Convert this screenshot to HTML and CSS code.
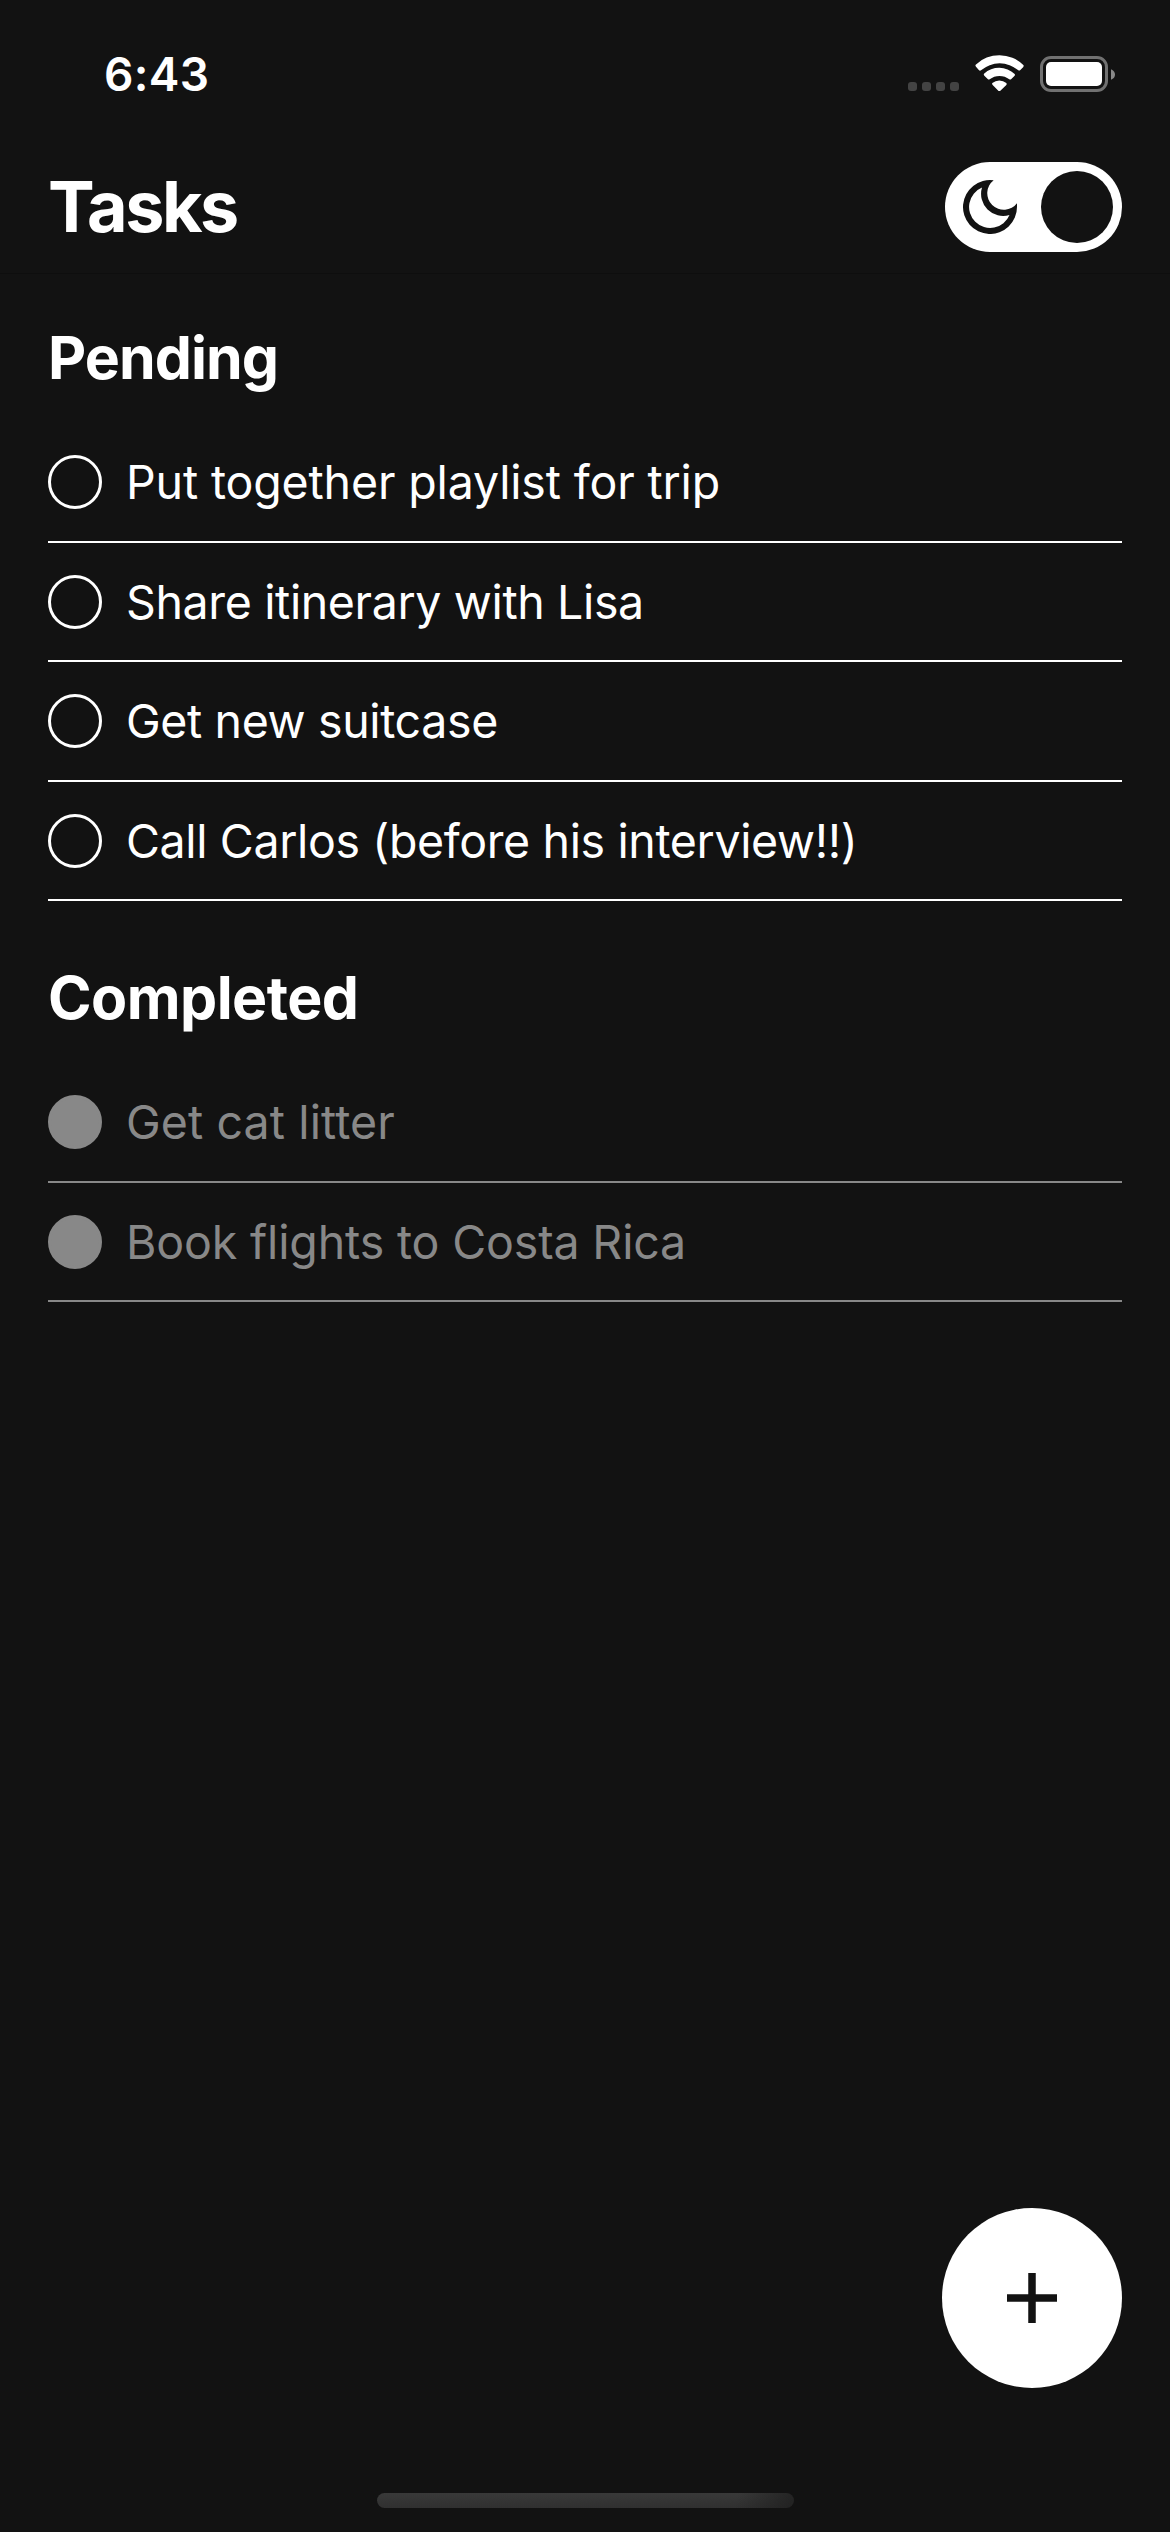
FILE: index.html
```
<!DOCTYPE html>
<html lang="en">
<head>
<meta charset="utf-8">
<title>Tasks</title>
<link rel="stylesheet" href="styles.css">
</head>
<body>
<div class="screen">
  <div class="status-bar">
    <span class="time">6:43</span>
    <div class="indicators">
      <div class="signal"><i></i><i></i><i></i><i></i></div>
      <svg class="wifi" viewBox="0 0 147 109">
        <path d="M2 29Q0 32 3 35L12 46Q15 48 18 46A85 85 0 0 1 130 46Q133 48 136 45L145 36Q147 32 145 30A103 103 0 0 0 2 29Z"/>
        <path d="M27 56Q25 59 28 62L38 72Q41 75 44 73A48 48 0 0 1 103 73Q106 75 109 72L119 62Q121 59 119 57A68 68 0 0 0 27 56Z"/>
        <path d="M52 84Q50 87 53 90L70 107Q73 110 76 107L94 90Q96 87 94 84A33 33 0 0 0 52 84Z"/>
      </svg>
      <div class="battery">
        <div class="battery-case"><div class="battery-level"></div></div>
        <svg class="battery-cap" viewBox="0 0 12 32"><path d="M0 0Q12 5 12 16Q12 27 0 32Z"/></svg>
      </div>
    </div>
  </div>

  <header class="header">
    <h1>Tasks</h1>
    <div class="theme-toggle">
      <svg class="moon" viewBox="279 480 162 162">
        <path fill-rule="evenodd" d="M371 480.8A81 81 0 1 0 441 561V549.5A49.5 49.5 0 1 1 371 480.8ZM336 502.7A63 63 0 1 0 418.5 584.8A66 66 0 0 1 336 502.7Z"/>
      </svg>
      <div class="knob"></div>
    </div>
  </header>

  <main class="content">
    <section>
      <h2 class="title-pending">Pending</h2>
      <ul class="tasks">
        <li class="task"><span class="check"></span><span class="label label-loose">Put together playlist for trip</span></li>
        <li class="task"><span class="check"></span><span class="label">Share itinerary with Lisa</span></li>
        <li class="task tall"><span class="check"></span><span class="label">Get new suitcase</span></li>
        <li class="task"><span class="check"></span><span class="label">Call Carlos (before his interview!!)</span></li>
      </ul>
    </section>
    <section>
      <h2 class="title-completed">Completed</h2>
      <ul class="tasks">
        <li class="task done"><span class="check"></span><span class="label label-wide">Get cat litter</span></li>
        <li class="task done"><span class="check"></span><span class="label label-loose">Book flights to Costa Rica</span></li>
      </ul>
    </section>
  </main>

  <footer class="footer">
    <button class="add" aria-label="Add task">
      <svg viewBox="0 0 50 50"><path d="M25 0V50M0 25H50"/></svg>
    </button>
    <div class="home-indicator"></div>
  </footer>
</div>
</body>
</html>
```
FILE: styles.css
```
* {
  box-sizing: border-box;
}

body {
  margin: 0;
  background: #121212;
  color: #fff;
  font-family: "Inter", "Liberation Sans", sans-serif;
}

h1, h2, ul {
  margin: 0;
  padding: 0;
}

.screen {
  display: flex;
  flex-direction: column;
  width: 1170px;
  height: 2532px;
}

.status-bar {
  display: flex;
  justify-content: space-between;
  height: 141px;
  padding: 44px 55px 0 104px;
}

.time {
  font-size: 46px;
  font-weight: 600;
  line-height: 60px;
  letter-spacing: 0.3px;
}

.indicators {
  display: flex;
  align-items: flex-start;
  padding-top: 11px;
}

.signal {
  display: flex;
  gap: 5px;
  margin: 27px 16px 0 0;
}

.signal i {
  width: 9px;
  height: 9px;
  border-radius: 3px;
  background: #434343;
}

.wifi {
  width: 49px;
  height: 36.33px;
  margin-right: 16px;
  fill: #fff;
}

.battery {
  display: flex;
  align-items: center;
  gap: 3px;
  margin-top: 1px;
}

.battery-case {
  width: 68px;
  height: 36px;
  padding: 3px;
  border: 3px solid #717171;
  border-radius: 11px;
}

.battery-level {
  height: 24px;
  border-radius: 5px;
  background: #fff;
}

.battery-cap {
  width: 4px;
  height: 11px;
  fill: #888;
}

.header {
  display: flex;
  align-items: center;
  justify-content: space-between;
  height: 133px;
  padding: 0 48px;
  border-bottom: 1px solid #0e0e0e;
}

h1 {
  font-size: 70px;
  line-height: 90px;
  letter-spacing: -2.5px;
}

.theme-toggle {
  display: flex;
  align-items: center;
  justify-content: space-between;
  width: 177px;
  height: 90px;
  padding: 9px 9px 9px 18px;
  border-radius: 45px;
  background: #fff;
}

.moon {
  width: 54px;
  height: 54px;
  fill: #121212;
}

.knob {
  width: 72px;
  height: 72px;
  border-radius: 50%;
  background: #121212;
}

.content {
  display: flex;
  flex: 1;
  flex-direction: column;
  gap: 61px;
  padding: 48px 48px 0;
}

h2 {
  margin-bottom: 30px;
  font-size: 59px;
  line-height: 72px;
}

.title-pending {
  letter-spacing: -0.97px;
}

.title-completed {
  letter-spacing: -0.55px;
}

.tasks {
  list-style: none;
}

.task {
  display: flex;
  align-items: flex-start;
  gap: 24px;
  height: 119px;
  padding-top: 32px;
  border-bottom: 2px solid #fff;
}

.task:first-child {
  padding-top: 31px;
}

.task.tall {
  height: 120px;
}

.check {
  width: 54px;
  height: 54px;
  border: 3px solid #fff;
  border-radius: 50%;
}

.label {
  font-size: 46.5px;
  line-height: 54px;
  letter-spacing: -0.37px;
  white-space: nowrap;
}

.label-loose {
  letter-spacing: -0.15px;
}

.label-wide {
  letter-spacing: 0.1px;
}

.done {
  border-color: #888;
  color: #888;
}

.done .check {
  border-color: #888;
  background: #888;
}

.footer {
  display: flex;
  flex-direction: column;
  align-items: center;
  padding: 0 48px 24px;
}

.add {
  display: flex;
  align-items: center;
  justify-content: center;
  align-self: flex-end;
  width: 180px;
  height: 180px;
  margin-bottom: 105px;
  padding: 0;
  border: 0;
  border-radius: 50%;
  background: #fff;
}

.add svg {
  width: 50px;
  height: 50px;
  fill: none;
  stroke: #121212;
  stroke-width: 7.5;
}

.home-indicator {
  width: 417px;
  height: 15px;
  border-radius: 7.5px;
  background:
    linear-gradient(100deg, transparent 86%, rgba(30, 30, 30, 0.75) 99%),
    linear-gradient(#393939, #303030);
}
```
